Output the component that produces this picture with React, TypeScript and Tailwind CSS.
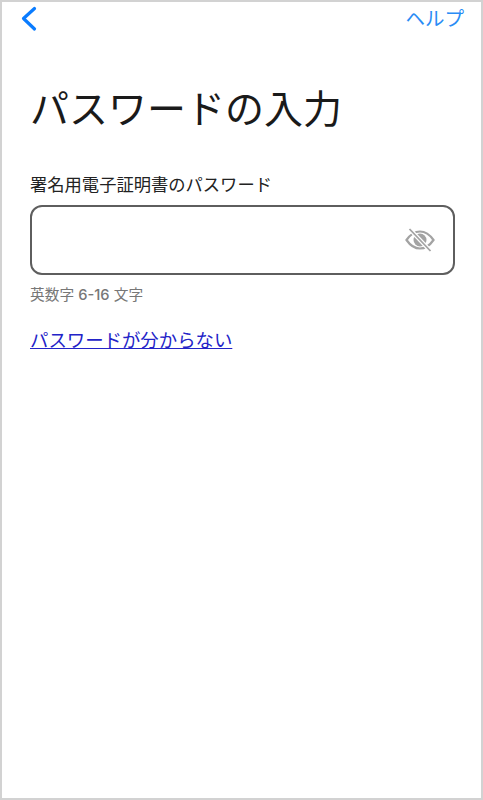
const font = { fontFamily: '"Inter", "Noto Sans CJK JP", sans-serif' };

export default function App() {
  return (
    <div
      style={font}
      className="box-border flex h-[800px] w-[483px] flex-col border-2 border-[#d2d2d2] bg-white"
    >
      <header className="flex h-[34px] items-start justify-between pl-[18px] pr-[17px]">
        <svg width="18" height="26" viewBox="0 0 18 26" className="mt-[4px]" fill="none">
          <path d="M14.5 2.5 L3.5 12.5 L14.5 23" stroke="#0a7cff" strokeWidth="3.2" strokeLinecap="round" strokeLinejoin="round" />
        </svg>
        <span className="mt-[4px] text-[19.5px] leading-[26px] text-[#2a8cf5]">ヘルプ</span>
      </header>

      <main className="flex flex-col px-[28px]">
        <h1 className="mt-[48px] text-[39px] font-normal leading-[50px] text-[#1a1a1a]">パスワードの入力</h1>
        <label className="mt-[39px] text-[17.3px] leading-[24px] text-[#222]">署名用電子証明書のパスワード</label>
        <div className="mt-[8px] flex h-[70px] w-[425px] items-center justify-end rounded-[12px] border-2 border-[#5e5e5e] pr-[18px]">
          <svg width="30" height="24" viewBox="0 0 30 24" fill="none">
            <path d="M1.5 12 C6 5.5 10.5 3.5 15 3.5 C19.5 3.5 24 5.5 28.5 12 C24 18.5 19.5 20.5 15 20.5 C10.5 20.5 6 18.5 1.5 12 Z" stroke="#a3a3a3" strokeWidth="2.2" />
            <circle cx="15" cy="12" r="6.5" fill="#a3a3a3" />
            <path d="M5 1.5 L25 22.5" stroke="#fff" strokeWidth="4" />
            <path d="M4.5 1 L25.5 23" stroke="#a3a3a3" strokeWidth="1.8" />
          </svg>
        </div>
        <p className="mt-[9px] text-[14.7px] leading-[22px] text-[#777]">英数字 <span className="font-medium">6-16</span> 文字</p>
        <a className="mt-[21px] self-start text-[18.4px] leading-[26px] text-[#2323c8] underline">パスワードが分からない</a>
      </main>
    </div>
  );
}
